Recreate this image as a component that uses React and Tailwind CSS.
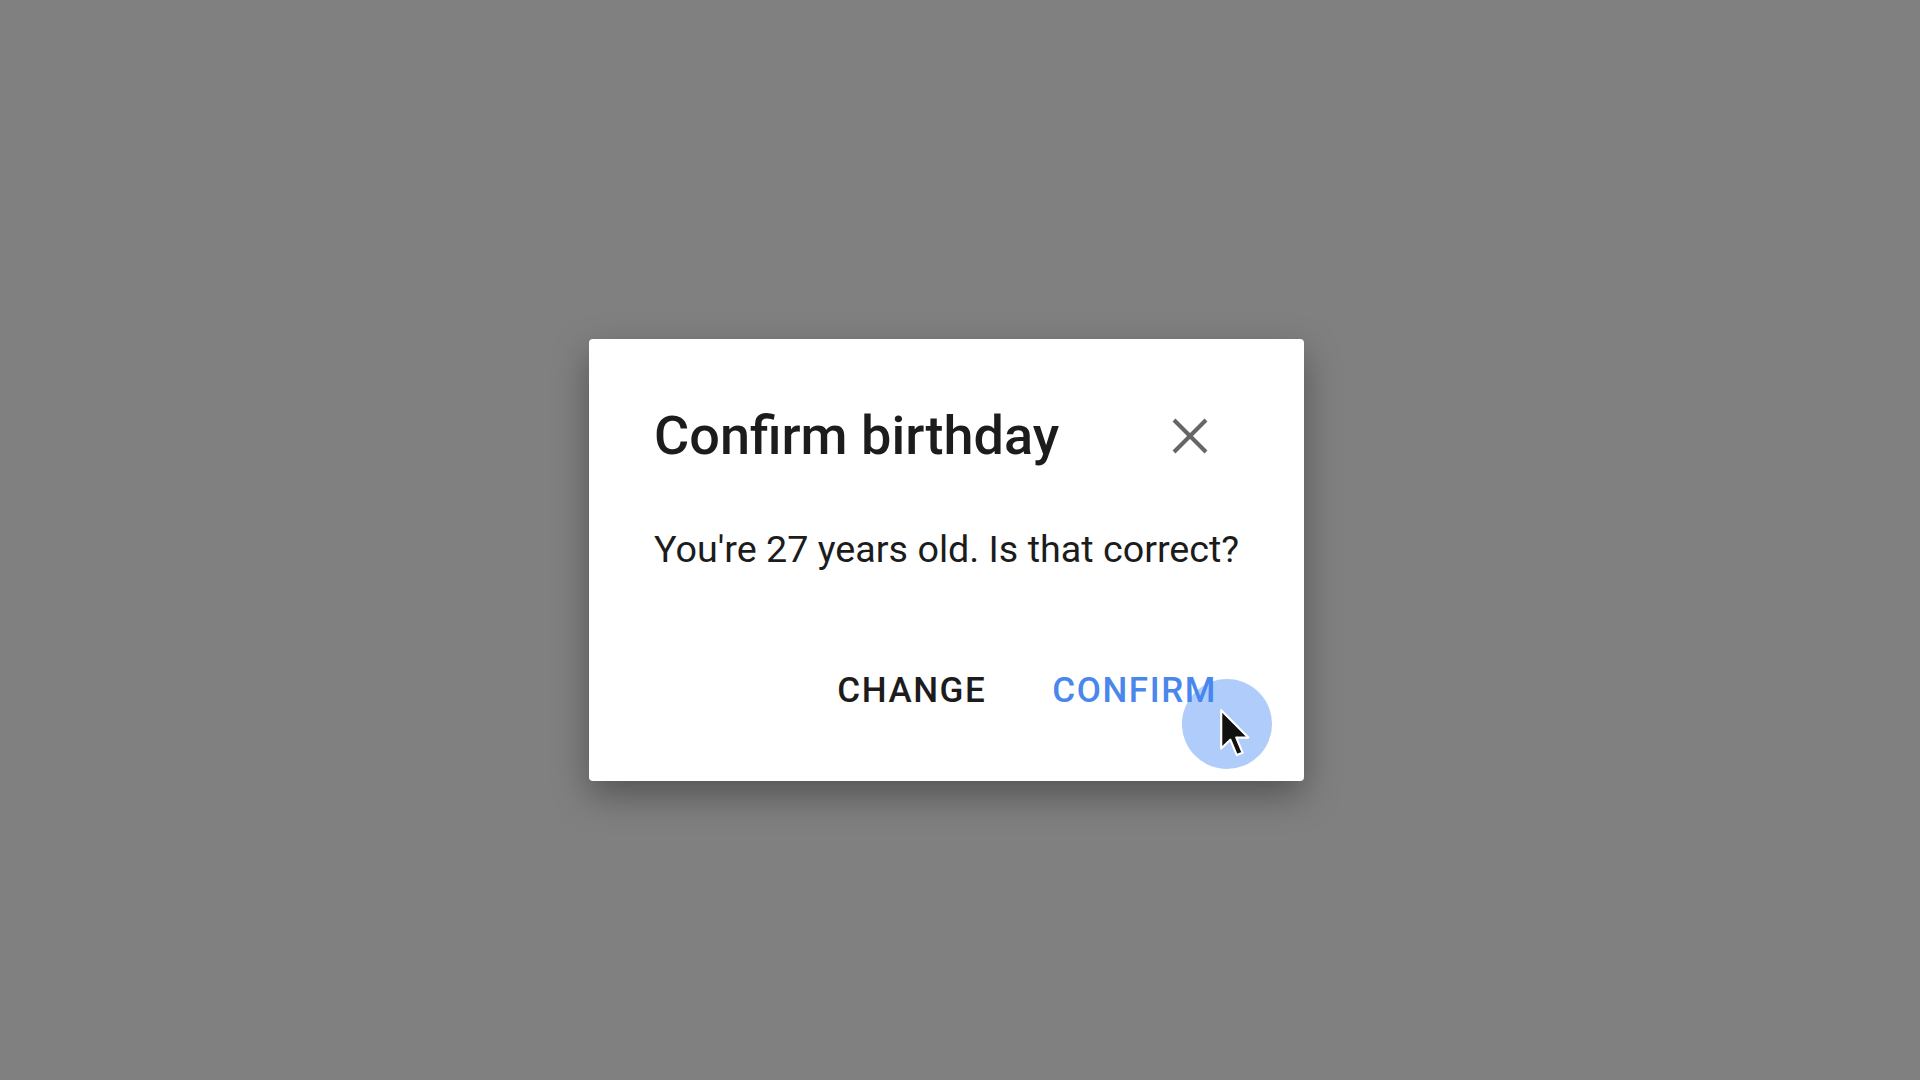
import React from 'react';

const CloseIcon = () => (
  <svg width="36" height="36" viewBox="0 0 36 36" fill="none" stroke="#666666" strokeWidth="4">
    <line x1="2" y1="2" x2="34" y2="34" />
    <line x1="34" y1="2" x2="2" y2="34" />
  </svg>
);

const Cursor = () => (
  <svg width="30" height="48" viewBox="0 0 12.5 20" className="block">
    <path
      d="M0.5 0.5 L0.5 16.5 L4.3 12.8 L7 19.2 L9.4 18.2 L6.8 11.9 L11.8 11.9 Z"
      fill="#111111"
      stroke="#ffffff"
      strokeWidth="0.9"
      strokeLinejoin="round"
    />
  </svg>
);

export default function App() {
  return (
    <div className="min-h-screen w-full bg-[#808080] pt-[339px] pl-[589px] font-['Roboto',sans-serif]">
      <div className="relative w-[715px] h-[442px] bg-white rounded-[4px] shadow-[0_14px_36px_rgba(0,0,0,0.35)] pt-[65px] pl-[65px] pr-[87px]">
        {/* header */}
        <div className="flex items-center justify-between pr-[9px]">
          <h2 className="text-[54px] leading-[64px] font-medium text-[#1c1c1c]">Confirm birthday</h2>
          <button className="flex items-center justify-center">
            <CloseIcon />
          </button>
        </div>

        <p className="mt-[59px] text-[37.7px] leading-[44px] text-[#1c1c1c] whitespace-nowrap">
          You're 27 years old. Is that correct?
        </p>

        <div className="mt-[100px] flex justify-end gap-[66px]">
          <button className="text-[35px] leading-[40px] font-medium tracking-[0.045em] text-[#1c1c1c]">CHANGE</button>
          <button className="text-[35px] leading-[40px] font-medium tracking-[0.045em] text-[#4a87ec]">CONFIRM</button>
        </div>

        {/* click ripple + pointer */}
        <div className="absolute left-[593px] top-[340px] w-[90px] h-[90px] rounded-full bg-[rgba(66,133,244,0.42)]" />
        <div className="absolute left-[631px] top-[370px]">
          <Cursor />
        </div>
      </div>
    </div>
  );
}
